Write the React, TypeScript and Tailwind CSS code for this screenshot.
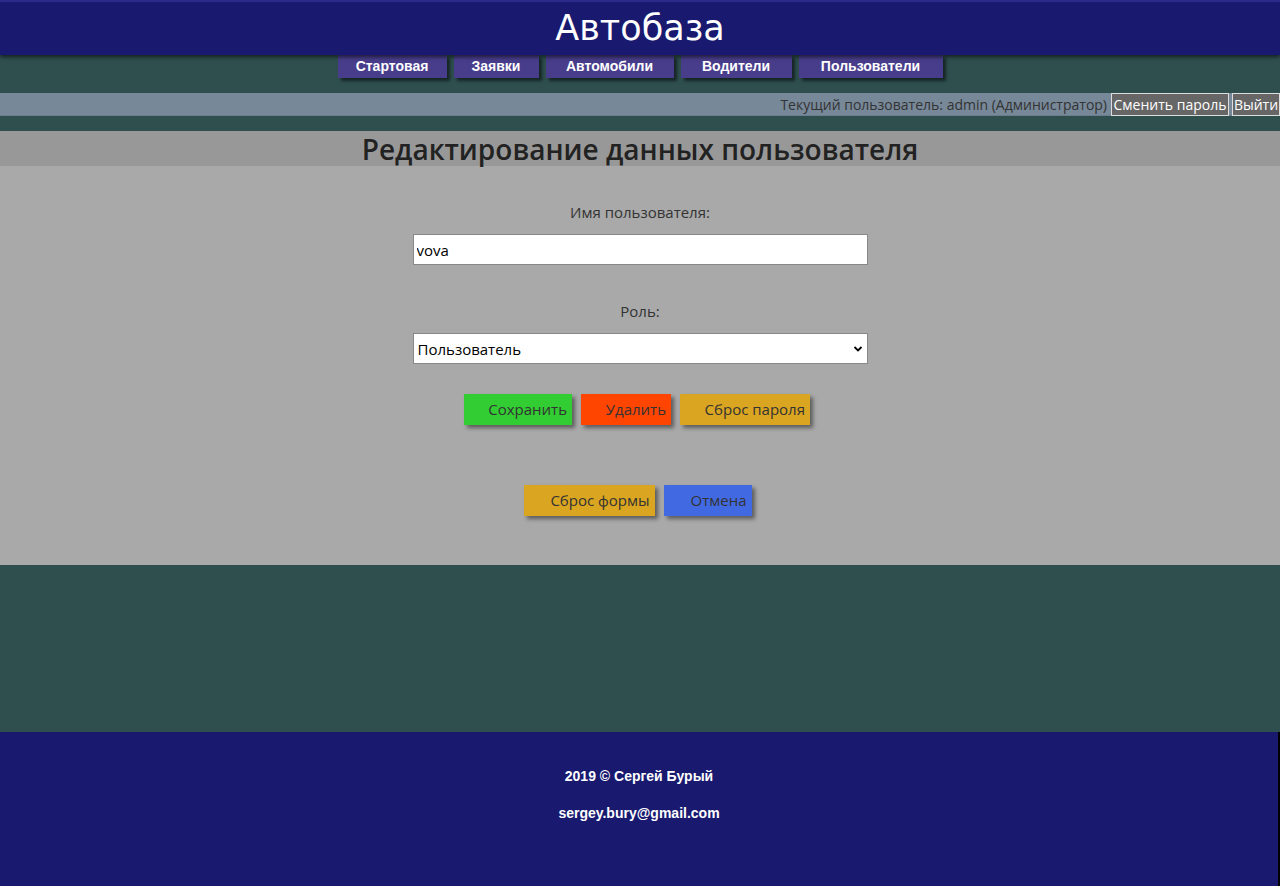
import React from 'react';

const comic = { fontFamily: '"DejaVu Sans", "Liberation Sans", sans-serif' };
const comicBold = { fontFamily: '"Liberation Sans", Arial, sans-serif' };

const navItems = [
  { label: 'Стартовая', w: 'w-[109px]' },
  { label: 'Заявки', w: 'w-[85px]' },
  { label: 'Автомобили', w: 'w-[128px]' },
  { label: 'Водители', w: 'w-[111px]' },
  { label: 'Пользователи', w: 'w-[144px]' },
];

function ActionButton({ label, color, w }: { label: string; color: string; w: string }) {
  return (
    <button
      className={`${color} ${w} h-[31px] pr-[5px] text-right text-[15px] text-[#333] shadow-[3px_3px_4px_rgba(0,0,0,0.45)]`}
    >
      {label}
    </button>
  );
}

export default function App() {
  return (
    <div
      className="flex min-h-[886px] flex-col bg-[#2f4f4f]"
      style={{ fontFamily: '"Open Sans", "Noto Sans", sans-serif' }}
    >
      {/* Header */}
      <header className="relative z-10 flex h-[55px] items-center justify-center border-t-2 border-[#2d2a8a] bg-[#191970] shadow-[0_2px_4px_rgba(0,0,0,0.6)]">
        <h1 className="text-[35px] font-normal leading-none text-white" style={comic}>
          Автобаза
        </h1>
      </header>

      {/* Navigation */}
      <nav className="flex justify-center gap-[7px]">
        {navItems.map((item) => (
          <a
            key={item.label}
            className={`${item.w} flex h-[23px] items-center justify-center bg-[#483d8b] text-[14px] font-bold text-white shadow-[3px_3px_3px_rgba(0,0,0,0.55)]`}
            style={comicBold}
          >
            {item.label}
          </a>
        ))}
      </nav>

      {/* User bar */}
      <div className="mt-[15px] flex h-[23px] items-center justify-end gap-[3px] border-b border-[#6c7d8d] bg-[#778899] text-[14px] text-[#333]">
        <span className="mr-[1px]">Текущий пользователь: admin (Администратор)</span>
        <button className="h-[23px] w-[118px] border border-[#ddd] bg-[#666] text-white">Сменить пароль</button>
        <button className="h-[23px] w-[48px] border border-[#ddd] bg-[#666] text-white">Выйти</button>
      </div>

      {/* Main */}
      <main className="mt-[15px]">
        <div className="flex h-[35px] items-end justify-center bg-[#989898]">
          <h2 className="text-[28px] font-semibold leading-[34px] text-[#222]">
            Редактирование данных пользователя
          </h2>
        </div>
        <div className="flex h-[399px] flex-col items-center bg-[#a9a9a9] pt-[35px] text-[15px] text-[#333]">
          <label className="leading-[22px]">Имя пользователя:</label>
          <input
            defaultValue="vova"
            className="mt-[11px] h-[31px] w-[455px] border border-[#888] bg-white px-[3px] text-[15px] text-black"
          />
          <label className="mt-[35px] leading-[22px]">Роль:</label>
          <div className="relative mt-[11px] h-[31px] w-[455px] border border-[#888] bg-white">
            <span className="absolute left-[4px] top-[4px] text-[15px] text-black">Пользователь</span>
            <svg className="absolute right-[4px] top-[11px]" width="10" height="8" viewBox="0 0 10 8">
              <path d="M1.5 2 L5 5.5 L8.5 2" fill="none" stroke="#000" strokeWidth="1.8" />
            </svg>
          </div>
          <div className="mr-[6px] mt-[30px] flex gap-[9px]">
            <ActionButton label="Сохранить" color="bg-[#32cd32]" w="w-[108px]" />
            <ActionButton label="Удалить" color="bg-[#ff4500]" w="w-[90px]" />
            <ActionButton label="Сброс пароля" color="bg-[#daa520]" w="w-[130px]" />
          </div>
          <div className="mr-[5px] mt-[60px] flex gap-[9px]">
            <ActionButton label="Сброс формы" color="bg-[#daa520]" w="w-[131px]" />
            <ActionButton label="Отмена" color="bg-[#4169e1]" w="w-[88px]" />
          </div>
        </div>
      </main>

      <div className="flex-1" />

      {/* Footer */}
      <footer
        className="flex h-[154px] flex-col items-center border-r-2 border-[#000] bg-[#191970] pt-[34px] text-[14px] font-bold text-white"
        style={comicBold}
      >
        <p>2019 © Сергей Бурый</p>
        <p className="mt-[16px]">sergey.bury@gmail.com</p>
      </footer>
    </div>
  );
}
